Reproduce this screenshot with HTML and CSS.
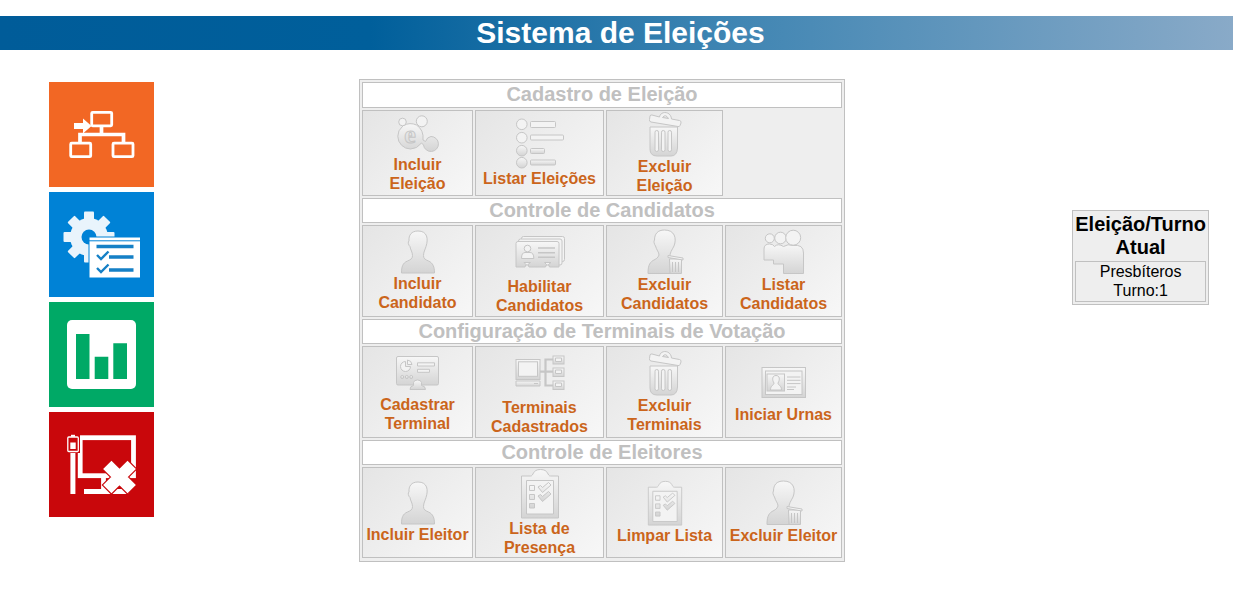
FILE: index.html
```html
<!DOCTYPE html>
<html lang="pt-BR">
<head>
<meta charset="utf-8">
<title>Sistema de Eleições</title>
<link rel="stylesheet" href="styles.css">
</head>
<body>
<svg class="defs" aria-hidden="true">
  <defs>
    <linearGradient id="shade" x1="0" y1="0" x2="0" y2="1"><stop offset="0" stop-color="#f7f7f7"/><stop offset="1" stop-color="#d4d4d4"/></linearGradient>
    <symbol id="trash" viewBox="0 0 50 46">
      <path d="M10 16H37.500V37Q37 45 31 45H17Q10 45 10 38Z"/>
      <path class="light" d="M19.500 6C20.500 -0.500 31 0 31.500 8L39.500 9.500Q41.500 10 41 12L40 14.500Q39.500 16 38 15.500L11 11Q9 10.500 9.500 8.500L10 5Q10.500 3.500 12 4Z"/>
      <path d="M22.500 6.500Q25.500 2.500 28.500 7.500Z"/>
      <rect class="light" x="15" y="19.500" width="3.500" height="21" rx="1.700"/><rect class="light" x="21.500" y="19.500" width="3.500" height="21" rx="1.700"/><rect class="light" x="28" y="19.500" width="3.500" height="21" rx="1.700"/>
    </symbol>
    <symbol id="person" viewBox="0 0 50 44">
      <path d="M25 1C18.500 1 15.500 5 16 11C14.500 11.500 15.500 15.500 17 16.500C17.500 20 19.500 22 19.500 25.500C19.500 28.500 18 29.500 14.500 31C9.500 33 8.500 37 8.500 43H41.500C41.500 37 40 33 35.500 31C32 29.500 30.500 28.500 30.500 25.500C30.500 22 32 20 33 16.500C35.500 9 34.500 1 25 1Z"/>
    </symbol>
    <symbol id="person-trash" viewBox="0 0 50 46">
      <path d="M24.500 1C17.500 1 14.500 5 14.500 11C13.500 12 14 15 15.500 17C16.500 21 19 23 19 26C18 29 16 30 13 31.500C9 34 8 38 8 44.500H40V32L30 28C29.500 24 32 21 34 17C37 9 34.500 1 24.500 1Z"/>
      <path d="M29.500 30H41.500V44.500H30Z"/><path class="light" d="M28 26.500L43 29V31L28 28.500Z"/><path d="M32.500 33V43M35.500 33V43M38.500 33V43"/>
    </symbol>
    <symbol id="clipboard" viewBox="0 0 50 51">
      <path d="M6.500 8H15.500C19 8 17 1.500 25.500 1.500S32 8 35.500 8H43.500V50H6.500Z"/>
      <path class="light" d="M11.500 12.500H38.500V46H11.500Z"/>
      <path d="M14.500 17.500H19.500V22.500H14.500ZM14.500 26.500H19.500V31.500H14.500ZM14.500 35.500H19.500V40H14.500Z"/>
      <path d="M23 19L25.500 17.500 27.500 19.500 33.500 14.500 36 17 27.500 24.500ZM23 28L25.500 26.500 27.500 28.500 33.500 23.500 36 26 27.500 33.500Z"/>
    </symbol>
  </defs>
</svg>

<header class="banner"><h1>Sistema de Eleições</h1></header>

<main class="layout">
  <nav class="tiles" aria-label="Principal">
    <button class="tile orange" type="button" aria-label="Eleições">
      <svg viewBox="0 0 105 105" fill="none" stroke="#fff">
        <g stroke-width="2.800"><rect x="42.700" y="30.300" width="20" height="13.500" rx="1"/><rect x="21.700" y="61.200" width="20" height="13.500" rx="1"/><rect x="64" y="61.200" width="20" height="13.500" rx="1"/></g>
        <path d="M52.500 44V52M31 61V52.500H74.500V61" stroke-width="3.700"/>
        <path d="M25 41H34V36.500L42.500 44 34 51.500V47H25Z" fill="#fff" stroke="none"/>
      </svg>
    </button>
    <button class="tile blue" type="button" aria-label="Configurações">
      <svg viewBox="0 0 105 105">
        <g fill="#e9f4fc"><rect x="35" y="19.500" width="10" height="51" rx="1"/><rect x="35" y="19.500" width="10" height="51" rx="1" transform="rotate(45 40 45)"/><rect x="35" y="19.500" width="10" height="51" rx="1" transform="rotate(90 40 45)"/><rect x="35" y="19.500" width="10" height="51" rx="1" transform="rotate(135 40 45)"/><circle cx="40" cy="45" r="19"/></g>
        <circle cx="40" cy="45" r="7.500" fill="#0082d6"/>
        <rect x="40" y="45" width="51.500" height="41" fill="#fff" stroke="#0082d6"/>
        <path d="M40 48.800H91" stroke="#0082d6"/>
        <path d="M47.500 54.500H84.500M60 65H84.500M60 78H84.500" stroke="#1580c6" stroke-width="3.700"/>
        <path d="M48 63L52 67 59.500 59.500M48 76L52 80 59.500 72.500" fill="none" stroke="#1580c6" stroke-width="2.400"/>
      </svg>
    </button>
    <button class="tile green" type="button" aria-label="Resultados">
      <svg viewBox="0 0 105 105"><rect x="18" y="18" width="69" height="69" rx="5" fill="#fff"/><path d="M27 32H40.500V77H27ZM45.700 54.700H59.300V77H45.700ZM64.300 41.300H78V77H64.300Z" fill="#00a966"/></svg>
    </button>
    <button class="tile red" type="button" aria-label="Encerrar">
      <svg viewBox="0 0 105 105" fill="none" stroke="#fff">
        <rect x="31.200" y="25.700" width="53.300" height="38" stroke-width="4.800"/>
        <path d="M54.500 65V79.500M35 79.500H80" stroke-width="4.800"/>
        <path d="M23.900 40V82" stroke-width="5"/>
        <rect x="17.500" y="23.500" width="13" height="17" fill="#c9070b" stroke="#c9070b"/>
        <rect x="18.800" y="25" width="10.500" height="14.500" rx="1" stroke-width="1.300"/><path d="M22 23.800H26" stroke-width="2"/><rect x="21.300" y="30.500" width="5.400" height="6.500" fill="#fff" stroke="none"/>
        <path d="M57.500 52L83.500 78M83.500 52L57.500 78" stroke="#c9070b" stroke-width="14"/>
        <path d="M58.300 52.800L82.700 77.200M82.700 52.800L58.300 77.200" stroke-width="11.800"/>
      </svg>
    </button>
  </nav>

  <section class="panel" aria-label="Menu">
    <h2>Cadastro de Eleição</h2>
    <button type="button"><svg class="icon" width="50" height="42" viewBox="0 0 50 42"><path d="M10.500 12.500Q17 9 23.500 12Q31 17 30 27L32.500 28.500Q34 24 38 23.500A7.500 7.500 0 1 1 30.500 32L28.500 30Q24 36 17.500 36A12.800 12.800 0 0 1 4.800 23.300Q5 17 9 14Z"/><circle class="light" cx="9.500" cy="9" r="3.800"/><circle class="light" cx="28.800" cy="8.300" r="5.500"/><text x="17" y="30" aria-hidden="true">e</text></svg><span>Incluir Eleição</span></button>
    <button type="button"><svg class="icon" width="50" height="51" viewBox="0 0 50 51"><circle class="light" cx="6.800" cy="6.300" r="5.300"/><circle class="light" cx="6.800" cy="19.700" r="5.300"/><circle cx="6.800" cy="32.700" r="5.300"/><circle cx="6.800" cy="44.700" r="5.300"/><rect class="light" x="15.500" y="3.500" width="25" height="6" rx="1"/><rect class="light" x="15.500" y="17" width="33" height="5" rx="1"/><rect x="15.500" y="30.500" width="14" height="5" rx="1"/><rect x="15.500" y="42" width="25" height="5" rx="1"/></svg><span>Listar Eleições</span></button>
    <button type="button"><svg class="icon" width="50" height="46"><use href="#trash"/></svg><span>Excluir Eleição</span></button>

    <h2>Controle de Candidatos</h2>
    <button type="button"><svg class="icon" width="50" height="44"><use href="#person"/></svg><span>Incluir Candidato</span></button>
    <button type="button"><svg class="icon" width="50" height="50" viewBox="0 0 50 50"><rect class="light" x="6.500" y="9.500" width="43" height="25" rx="2"/><rect class="light" x="3.500" y="12" width="43.500" height="26" rx="2"/><path d="M3 14.500H42Q44 14.500 44 16.500V40H34.500L33.500 37.500 36 35.500H29.500L31.500 37.500 30.500 40H14L13 37.500 15.500 35.500H9L11 37.500 10 40H1V16.500Q1 14.500 3 14.500Z"/><circle class="light" cx="12.500" cy="21.500" r="3.300"/><path class="light" d="M6.500 31.500Q6.500 25.500 10 25.500H15Q18.800 25.500 18.800 31.500Z"/><path d="M23 21H40M23 25.700H40M23 30.300H40" stroke-width="1.600"/></svg><span>Habilitar Candidatos</span></button>
    <button type="button"><svg class="icon" width="50" height="46"><use href="#person-trash"/></svg><span>Excluir Candidatos</span></button>
    <button type="button"><svg class="icon" width="50" height="46" viewBox="0 0 50 46"><path d="M5 20Q5 15 10.500 15Q14 15 15.500 17.500Q19 14 24.500 17.500Q29 14.500 34 16.500Q44.500 15 44.500 24V44.500H24.500V35H14.500V31H5Z"/><circle class="light" cx="10.800" cy="9.300" r="4.500"/><circle class="light" cx="21.500" cy="9" r="5.800"/><circle class="light" cx="34.200" cy="8.700" r="7.500"/></svg><span>Listar Candidatos</span></button>

    <h2>Configuração de Terminais de Votação</h2>
    <button type="button"><svg class="icon" width="50" height="44" viewBox="0 0 50 44"><rect x="3.500" y="5.500" width="42" height="28.500" rx="1.500"/><path d="M17 38.500Q17 35 20.500 34.500V31.500Q21 29 24.500 29T28.500 31.500V34.500Q32.500 35 32.500 38.500Z"/><path class="light" d="M12.500 10.500A5 5 0 1 0 17.500 15.500H12.500ZM14.500 9V13.500H19Q18.500 9.500 14.500 9Z"/><path class="light" d="M24.500 11.800H41.500V15H24.500ZM24.500 18.300H36.500V21.300H24.500Z"/><circle cx="9.200" cy="26" r="1.500"/><circle cx="13.800" cy="26" r="1.500"/><circle cx="18.200" cy="26" r="1.500"/></svg><span>Cadastrar Terminal</span></button>
    <button type="button"><svg class="icon" width="50" height="50" viewBox="0 0 50 50"><path d="M25 23.700H38M38 11.500H30.500V37.500H38" fill="none" stroke-width="2.200"/><rect x="1" y="11.500" width="24" height="20"/><rect class="light" x="3.500" y="13.800" width="19" height="14.500"/><path d="M1 33H25V38H1ZM19 35.500H23"/><rect x="38" y="8" width="11" height="8"/><rect x="38" y="20" width="11" height="8.500"/><rect x="38" y="33" width="11" height="8.500"/><path class="light" d="M40.500 10H46.500V13.500H40.500ZM40.500 22H46.500V25.500H40.500ZM40.500 35H46.500V38.500H40.500Z"/></svg><span>Terminais Cadastrados</span></button>
    <button type="button"><svg class="icon" width="50" height="46"><use href="#trash"/></svg><span>Excluir Terminais</span></button>
    <button type="button"><svg class="icon" width="50" height="44" viewBox="0 0 50 44"><rect x="3" y="6.500" width="43.500" height="30"/><rect class="light" x="6.500" y="10" width="36.500" height="23.500"/><rect x="8" y="13" width="17.500" height="17"/><path class="light" d="M17 14.500C13 14.500 13 19 15 22C15 24.500 11.500 24 11.500 29H22.500C22.500 24 19 24.500 19 22C21 19 21 14.500 17 14.500Z"/><path d="M28 16H41.500M28 19.300H41.500M28 22.600H41.500M28 26H37M28 28.500H35"/></svg><span>Iniciar Urnas</span></button>

    <h2>Controle de Eleitores</h2>
    <button type="button"><svg class="icon" width="50" height="44"><use href="#person"/></svg><span>Incluir Eleitor</span></button>
    <button type="button"><svg class="icon" width="50" height="51"><use href="#clipboard"/></svg><span>Lista de Presença</span></button>
    <button type="button"><svg class="icon" width="50" height="46"><use href="#clipboard"/></svg><span>Limpar Lista</span></button>
    <button type="button"><svg class="icon" width="50" height="46"><use href="#person-trash"/></svg><span>Excluir Eleitor</span></button>
  </section>

  <aside class="current">
    <h2>Eleição/Turno Atual</h2>
    <p>Presbíteros<br>Turno:1</p>
  </aside>
</main>
</body>
</html>
```
FILE: styles.css
```css
* {
  box-sizing: border-box;
}

body {
  margin: 0;
  padding-top: 16px;
  background: #fff;
  font-family: "Liberation Sans", Arial, sans-serif;
  font-size: 16px;
  line-height: 19px;
}

h1,
h2,
p {
  margin: 0;
}

.defs {
  position: absolute;
  width: 0;
  height: 0;
}

.banner {
  padding-left: 8px;
  background: linear-gradient(90deg, #005c99 0%, #005f9b 30%, #3d84b2 58%, #89aac8 100%);
  color: #fff;
  text-align: center;
}

.banner h1 {
  font-size: 30px;
  line-height: 34px;
}

.layout {
  display: grid;
  grid-template-columns: 203fr 798fr 232fr;
  align-items: start;
  padding-top: 29px;
}

.tiles {
  display: grid;
  gap: 5px;
  justify-content: center;
  margin-top: 3px;
}

.tile {
  width: 105px;
  padding: 0;
  border: 0;
  cursor: pointer;
}

.tile svg {
  display: block;
}

.orange { background: #f26724; }
.blue { background: #0082d6; }
.green { background: #00a966; }
.red { background: #c9070b; }

.panel {
  display: grid;
  grid-template-columns: minmax(111px, auto) minmax(129px, auto) minmax(117px, auto) minmax(117px, auto);
  grid-template-rows: 26px minmax(86px, auto) 25px minmax(92px, auto) 25px minmax(92px, auto) 25px minmax(91px, auto);
  gap: 2px;
  justify-self: center;
  padding: 2px 2px 3px;
  border: 1px solid #c0c0c0;
  background: #eee;
}

.panel h2 {
  grid-column: 1 / -1;
  border: 1px solid #c0c0c0;
  background: #fff;
  color: #c0c0c0;
  font-size: 20px;
  line-height: 23px;
  text-align: center;
}

.panel button {
  display: flex;
  flex-direction: column;
  align-items: center;
  justify-content: center;
  width: 0;
  min-width: 100%;
  padding: 0 2px;
  border: 1px solid #c0c0c0;
  background: linear-gradient(135deg, #e5e5e5, #f7f7f7);
  color: #cb651b;
  font: inherit;
  font-weight: bold;
  cursor: pointer;
}

.icon {
  flex: none;
  fill: url(#shade);
  stroke: #c6c6c6;
  stroke-width: 1;
}

.icon text {
  font: bold 26px "Liberation Serif", serif;
  text-anchor: middle;
}

.light {
  fill: #f3f3f3;
}

.current {
  justify-self: end;
  width: min-content;
  margin: 131px 24px 0 0;
  padding: 2px;
  border: 1px solid #c0c0c0;
  background: #eee;
  text-align: center;
}

.current h2 {
  font-size: 20px;
  line-height: 23px;
}

.current p {
  margin-top: 2px;
  padding-bottom: 1px;
  border: 1px solid #c0c0c0;
}
```
